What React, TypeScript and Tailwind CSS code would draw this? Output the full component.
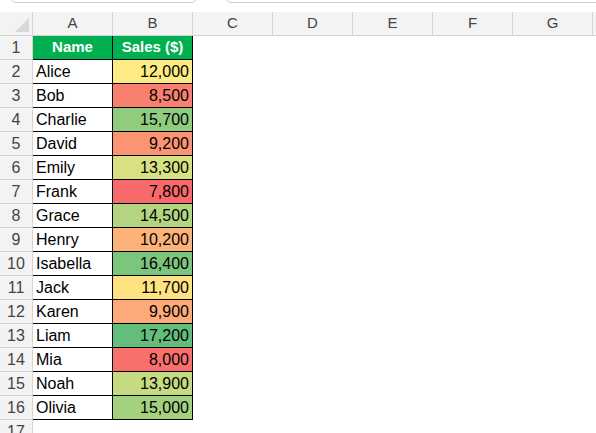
import React from "react";

const data: [string, number][] = [
  ["Alice", 12000], ["Bob", 8500], ["Charlie", 15700], ["David", 9200], ["Emily", 13300],
  ["Frank", 7800], ["Grace", 14500], ["Henry", 10200], ["Isabella", 16400], ["Jack", 11700],
  ["Karen", 9900], ["Liam", 17200], ["Mia", 8000], ["Noah", 13900], ["Olivia", 15000],
];
const MIN = 7800, MID = 12000, MAX = 17200;
const lerp = (a: number[], b: number[], t: number) => a.map((v, i) => Math.round(v + (b[i] - v) * t));
function color(v: number) {
  const r = [248, 105, 107], y = [255, 235, 132], g = [99, 190, 123];
  const c = v <= MID ? lerp(r, y, (v - MIN) / (MID - MIN)) : lerp(y, g, (v - MID) / (MAX - MID));
  return `rgb(${c[0]},${c[1]},${c[2]})`;
}
const cols = ["A", "B", "C", "D", "E", "F", "G"];

export default function App() {
  const font = { fontFamily: '"Liberation Sans", Arial, sans-serif' };
  return (
    <div className="w-[596px] h-[433px] overflow-hidden bg-white relative" style={font}>
      <div className="h-[12px] relative">
        <div className="absolute left-[10px] top-[-10px] w-[187px] h-[13px] border border-[#d0d0d0] rounded-md"></div>
        <div className="absolute left-[225px] top-[-10px] w-[400px] h-[13px] border border-[#d0d0d0] rounded-md"></div>
      </div>
      <div className="flex h-[24px] bg-[#f3f3f3] border-b border-[#d4d4d4]">
        <div className="w-[33px] shrink-0 border-r border-[#d4d4d4] relative">
          <div className="absolute right-[3px] bottom-[3px] w-0 h-0 border-l-[14px] border-l-transparent border-b-[14px] border-b-[#d8d8d8]"></div>
        </div>
        {cols.map((c) => (
          <div key={c} className="w-[80px] shrink-0 border-r border-[#d4d4d4] flex items-center justify-center text-[15px] text-[#444]">{c}</div>
        ))}
      </div>
      {Array.from({ length: 17 }).map((_, i) => {
        const row = i + 1;
        const hdr = row === 1;
        const d = row >= 2 && row <= 16 ? data[row - 2] : null;
        return (
          <div key={row} className="flex h-[24px]">
            <div className="w-[33px] shrink-0 bg-[#f3f3f3] border-r border-b border-[#d4d4d4] flex items-center justify-center text-[16px] text-[#444]">{row}</div>
            {hdr ? (
              <>
                <div className="w-[80px] shrink-0 bg-[#00b050] text-white font-bold text-[15px] flex items-center justify-center border-b border-r border-black">Name</div>
                <div className="w-[80px] shrink-0 bg-[#00b050] text-white font-bold text-[15px] flex items-center justify-center border-b border-r border-black">Sales ($)</div>
              </>
            ) : d ? (
              <>
                <div className="w-[80px] shrink-0 text-[16px] text-black flex items-center pl-[3px] border-b border-r border-black">{d[0]}</div>
                <div className="w-[80px] shrink-0 text-[16px] text-black flex items-center justify-end pr-[3px] border-b border-r border-black" style={{ background: color(d[1]) }}>{d[1].toLocaleString("en-US")}</div>
              </>
            ) : (
              <>
                <div className="w-[80px] shrink-0"></div>
                <div className="w-[80px] shrink-0"></div>
              </>
            )}
            <div className="flex-1"></div>
          </div>
        );
      })}
    </div>
  );
}
